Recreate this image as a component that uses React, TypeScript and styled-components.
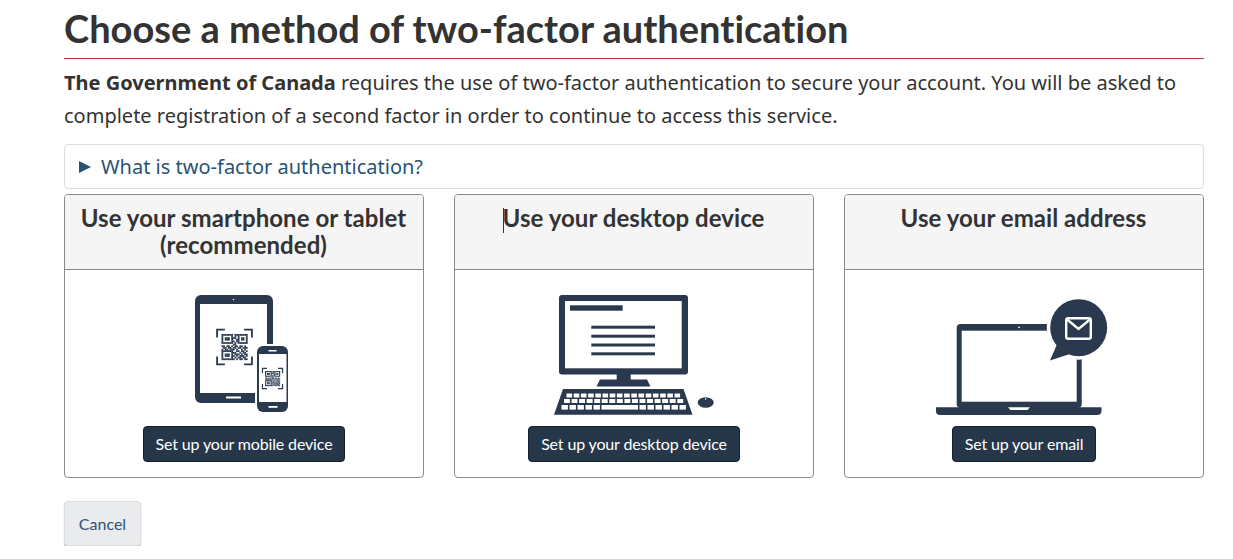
import React, {FC} from 'react';
import styled, {createGlobalStyle} from 'styled-components';

const DARK = '#2a394e';

// QR drawn as a small grid, 1 = dark module
const QR_ROWS = [
    '1111111011111111',
    '1000001010100001',
    '1011101110101101',
    '1011101001101101',
    '1000001101100001',
    '1111111010111111',
    '0000000110000000',
    '1101101011011010',
    '0110110110110111',
    '1011011101001010',
    '1111111001101101',
    '1000001110010110',
    '1011101011101011',
    '1011101101011101',
    '1000001010110110',
    '1111111101011011',
];

const Qr: FC<{x: number; y: number; size: number; bracket: number}> = ({x, y, size, bracket}) => {
    const cell = size / QR_ROWS.length
    const pad = size * 0.17
    const b0 = {x: x - pad, y: y - pad}
    const b1 = {x: x + size + pad, y: y + size + pad}
    const arm = size * 0.3
    return (
        <g>
            {QR_ROWS.map((row, r) => row.split('').map((c, i) => c === '1'
                ? <rect key={`${r}-${i}`} x={x + i * cell} y={y + r * cell} width={cell + 0.15} height={cell + 0.15} fill={DARK}/>
                : null))}
            <path
                d={`M${b0.x} ${b0.y + arm}V${b0.y}H${b0.x + arm}M${b1.x - arm} ${b0.y}H${b1.x}V${b0.y + arm}M${b1.x} ${b1.y - arm}V${b1.y}H${b1.x - arm}M${b0.x + arm} ${b1.y}H${b0.x}V${b1.y - arm}`}
                fill="none" stroke={DARK} strokeWidth={bracket}/>
        </g>
    )
}

const MobileIcon: FC = () => (
    <IconSvg width={140} height={130} viewBox="174 285 140 130">
        <rect x="195" y="295" width="78" height="108" rx="6" fill={DARK}/>
        <rect x="200" y="304" width="67" height="89" fill="#fff"/>
        <circle cx="233.5" cy="299.5" r="0.8" fill="#fff"/>
        <rect x="226" y="396.5" width="15" height="2" fill="#fff"/>
        <Qr x={221.5} y={334} size={26} bracket={1.8}/>
        <rect x="255" y="344" width="35" height="70" rx="8" fill="#fff"/>
        <rect x="257" y="346" width="31" height="66" rx="6" fill={DARK}/>
        <rect x="259" y="354" width="27.5" height="48" fill="#fff"/>
        <rect x="268.5" y="350" width="8" height="1.5" fill="#fff"/>
        <rect x="268.5" y="406" width="9" height="1.8" fill="#fff"/>
        <Qr x={265} y={371} size={15} bracket={1.2}/>
    </IconSvg>
)

const KEY_ROWS = [
    {y: 393.5, x0: 566.5, n: 16, pitch: 7.2},
    {y: 399, x0: 564, n: 16, pitch: 7.55},
]

const BOTTOM_KEYS = [561.5, 569.5, 577.5, 585.5, 593.5, 639.5, 647.5, 655.5, 663.5, 671.5, 679.5]

const DesktopIcon: FC = () => (
    <IconSvg width={180} height={130} viewBox="544 285 180 130">
        <rect x="559" y="295" width="129" height="79.5" rx="3" fill={DARK}/>
        <rect x="565" y="301" width="116.7" height="67.3" fill="#fff"/>
        <rect x="570" y="305.3" width="52.7" height="5.4" fill={DARK}/>
        <rect x="591.3" y="325.7" width="63.7" height="3" fill={DARK}/>
        <rect x="591.3" y="334.7" width="63.7" height="3" fill={DARK}/>
        <rect x="591.3" y="343.5" width="63.7" height="3" fill={DARK}/>
        <rect x="591.3" y="352.3" width="63.7" height="3" fill={DARK}/>
        <rect x="616.7" y="374" width="14" height="6" fill={DARK}/>
        <path d="M600 379.5H647L650.5 386.5H596.5Z" fill={DARK}/>
        <path d="M563 389H683.5L692.5 414.7H554Z" fill={DARK}/>
        {KEY_ROWS.map(row => Array.from({length: row.n}, (_, i) => (
            <rect key={`${row.y}-${i}`} x={row.x0 + i * row.pitch} y={row.y} width={row.pitch - 1.6} height={4} fill="#fff"/>
        )))}
        {BOTTOM_KEYS.map(x => <rect key={x} x={x} y="405" width="6.4" height="4.6" fill="#fff"/>)}
        <rect x="601.5" y="405" width="36.5" height="4.6" fill="#fff"/>
        <ellipse cx="705.7" cy="402.5" rx="8" ry="5.2" fill={DARK}/>
        <rect x="705.3" y="398" width="0.8" height="2" fill="#fff"/>
    </IconSvg>
)

const EmailIcon: FC = () => (
    <IconSvg width={180} height={130} viewBox="934 285 180 130">
        <rect x="956.7" y="324" width="125" height="84" rx="4" fill={DARK}/>
        <rect x="961.7" y="330.7" width="115" height="71" fill="#fff"/>
        <circle cx="1019" cy="327.3" r="0.9" fill="#fff"/>
        <path d="M936 407.3H1101.5V411Q1101.5 415 1097 415H940Q936 415 936 411Z" fill={DARK}/>
        <path d="M1008 407.3H1030L1027.5 410H1010.5Z" fill="#fff"/>
        <circle cx="1078.7" cy="327.7" r="32" fill="#fff"/>
        <path d="M1046 364L1056 342L1078 358Z" fill="#fff"/>
        <circle cx="1078.7" cy="327.7" r="28.5" fill={DARK}/>
        <path d="M1050 360.5L1058 342L1076 352Z" fill={DARK}/>
        <rect x="1066.2" y="318.2" width="24.6" height="20.6" rx="2" fill="none" stroke="#fff" strokeWidth="2.4"/>
        <path d="M1066.5 319L1078.5 329L1090.5 319" fill="none" stroke="#fff" strokeWidth="2.4"/>
    </IconSvg>
)

const METHODS = [
    {title: 'Use your smartphone or tablet (recommended)', action: 'Set up your mobile device', icon: <MobileIcon/>, caret: false},
    {title: 'Use your desktop device', action: 'Set up your desktop device', icon: <DesktopIcon/>, caret: true},
    {title: 'Use your email address', action: 'Set up your email', icon: <EmailIcon/>, caret: false},
]

const App: FC = () => {
    return (
        <Page>
            <GlobalStyle/>
            <Title>Choose a method of two-factor authentication</Title>
            <Intro>
                <strong>The Government of Canada</strong> requires the use of two-factor authentication to secure your
                account. You will be asked to complete registration of a second factor in order to continue to access
                this service.
            </Intro>
            <Details>
                <Arrow/>
                <span>What is two-factor authentication?</span>
            </Details>
            <Cards>
                {METHODS.map(method => (
                    <Card key={method.action}>
                        <CardHeader>
                            <CardTitle>{method.caret && <Caret/>}{method.title}</CardTitle>
                        </CardHeader>
                        <CardBody>
                            {method.icon}
                            <SetupButton>{method.action}</SetupButton>
                        </CardBody>
                    </Card>
                ))}
            </Cards>
            <CancelButton>Cancel</CancelButton>
        </Page>
    );
};

export default App;

const GlobalStyle = createGlobalStyle`
  html, body {
    margin: 0;
    padding: 0;
    background: #fff;
  }
  * {
    box-sizing: border-box;
  }
`
const Page = styled.div`
  width: 1140px;
  margin-left: 64px;
  padding-top: 8px;
  color: #333;
  font-family: "Noto Sans", sans-serif;
  font-variant-ligatures: none;
`
const Title = styled.h1`
  margin: 0;
  height: 51px;
  border-bottom: 1px solid #af3c43;
  font-family: Lato, sans-serif;
  font-weight: 700;
  font-size: 38px;
  line-height: 41px;
`
const Intro = styled.p`
  margin: 7px 0 0;
  font-size: 20px;
  line-height: 33px;
  strong {
    font-weight: 700;
  }
`
const Details = styled.div`
  display: flex;
  align-items: center;
  gap: 10px;
  height: 45px;
  margin-top: 12px;
  padding-left: 14px;
  border: 1px solid #ddd;
  border-radius: 4px;
  color: #295376;
  font-size: 20px;
`
const Arrow = styled.i`
  width: 0;
  height: 0;
  border-left: 12px solid #295376;
  border-top: 6px solid transparent;
  border-bottom: 6px solid transparent;
`
const Cards = styled.div`
  display: grid;
  grid-template-columns: repeat(3, 360px);
  gap: 30px;
  margin-top: 5px;
`
const Card = styled.section`
  height: 284px;
  display: flex;
  flex-direction: column;
  border: 1px solid #8a8a8a;
  border-radius: 4px;
  overflow: hidden;
`
const CardHeader = styled.header`
  height: 75px;
  flex: none;
  padding: 9px 15px 0 14px;
  background: #f5f5f5;
  border-bottom: 1px solid #8a8a8a;
`
const CardTitle = styled.h2`
  margin: 0;
  font-family: Lato, sans-serif;
  font-weight: 700;
  font-size: 24px;
  line-height: 27px;
  letter-spacing: 0.05px;
  text-align: center;
`
const Caret = styled.span`
  display: inline-block;
  width: 1px;
  height: 25px;
  margin-right: -1px;
  vertical-align: -6px;
  background: #333;
`
const CardBody = styled.div`
  flex: 1;
  display: flex;
  flex-direction: column;
  align-items: center;
  padding-top: 15px;
`
const IconSvg = styled.svg`
  display: block;
  flex: none;
`
const SetupButton = styled.button`
  margin-top: 11px;
  height: 36px;
  padding: 0 12px 2px;
  background: #26374a;
  border: 1px solid #16202c;
  border-radius: 4px;
  color: #fff;
  font-family: Lato, sans-serif;
  font-size: 16px;
  letter-spacing: -0.15px;
`
const CancelButton = styled.button`
  display: block;
  width: 77px;
  height: 45px;
  margin-top: 23px;
  background: #eaebed;
  border: 1px solid #dcdee1;
  border-radius: 4px;
  box-shadow: 0 1px 1px rgba(0, 0, 0, .3);
  color: #335075;
  font-family: Lato, sans-serif;
  font-size: 16px;
`
